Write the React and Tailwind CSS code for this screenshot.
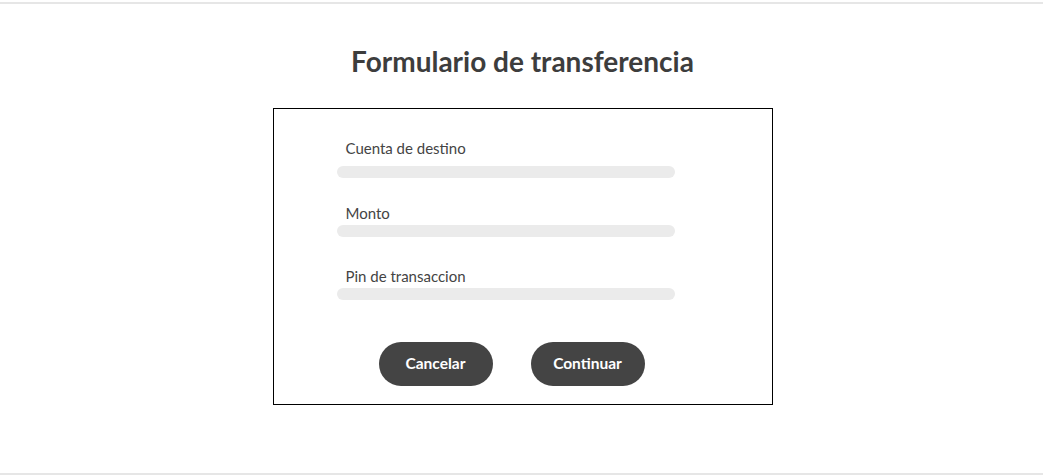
import React from "react";

function Field({ label, labelGap }) {
  return (
    <div className="flex flex-col">
      <label className={`pl-[9px] text-[15px] leading-[20px] text-[#444444] ${labelGap}`}>
        {label}
      </label>
      <div className="h-[12px] w-[338px] rounded-full bg-[#ebebeb]" />
    </div>
  );
}

export default function App() {
  return (
    <div
      className="flex h-[476px] w-full flex-col bg-white text-[#3d3d3d]"
      style={{ fontFamily: "Lato, 'Noto Sans', sans-serif" }}
    >
      {/* Top rule */}
      <div className="mt-[2px] h-[2px] w-full bg-[#e6e6e6]" />

      <main className="flex flex-1 flex-col items-center">
        <h1 className="ml-[2px] mt-[40px] text-[28px] font-bold leading-[35px] text-[#3d3d3d]">
          Formulario de transferencia
        </h1>

        {/* Form card */}
        <form className="ml-[2px] mt-[29px] flex h-[297px] w-[500px] flex-col border border-black pl-[63px] pt-[29px]">
          <Field label="Cuenta de destino" labelGap="mb-[8px]" />
          <div className="mt-[25px]">
            <Field label="Monto" labelGap="mb-[2px]" />
          </div>
          <div className="mt-[29px]">
            <Field label="Pin de transaccion" labelGap="mb-[2px]" />
          </div>

          <div className="ml-[42px] mt-[42px] flex gap-[38px]">
            <button
              type="button"
              className="h-[44px] w-[114px] rounded-full bg-[#444444] text-[15.5px] font-bold text-white"
            >
              Cancelar
            </button>
            <button
              type="button"
              className="h-[44px] w-[114px] rounded-full bg-[#444444] text-[15.5px] font-bold text-white"
            >
              Continuar
            </button>
          </div>
        </form>
      </main>

      {/* Bottom rule */}
      <div className="mb-[1px] h-[2px] w-full bg-[#e6e6e6]" />
    </div>
  );
}
